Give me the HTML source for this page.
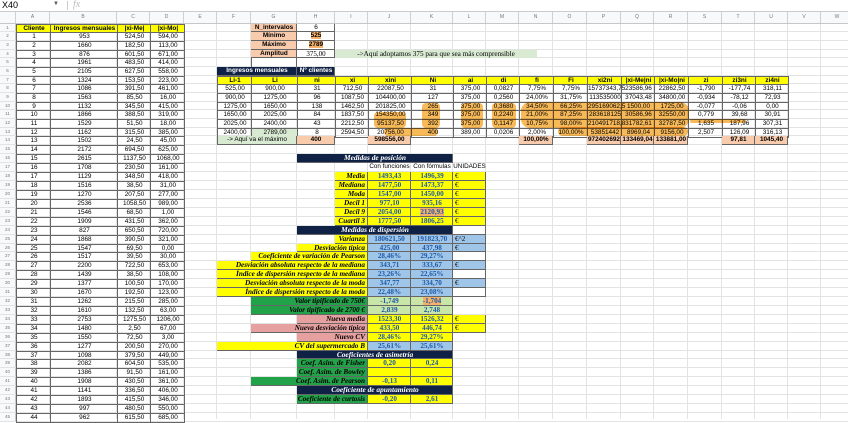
<!DOCTYPE html>
<html><head><meta charset="utf-8"><style>
*{box-sizing:border-box}
body{margin:0;width:848px;height:418px;overflow:hidden;background:#fff;font-family:"Liberation Sans",sans-serif;position:relative;color:#000}
.top{position:absolute;left:0;top:0;width:848px;height:12px;background:#fff;border-bottom:1px solid #ccc}
.top .nb{position:absolute;left:2px;top:0;font-size:9px;line-height:11px}
.top .dd{position:absolute;left:53px;top:1px;font-size:6px;color:#555}
.top .sep{position:absolute;left:67px;top:1px;width:1px;height:9px;background:#ccc}
.top .fx{position:absolute;left:73px;top:-1px;font-family:"Liberation Serif",serif;font-style:italic;font-size:10px;color:#bbb}
.ch{position:absolute;top:12px;left:0;height:11.5px;display:flex;background:#f8f9fa;border-bottom:1px solid #c7c7c7}
.ch div{height:100%;border-right:1px solid #d0d0d0;font-size:5px;color:#777;text-align:center;line-height:11px}
.vl{position:absolute;top:23.5px;left:0;height:395px;display:flex}
.vl div{height:100%;border-right:1px solid #e2e3e3}
.rows{position:absolute;top:23.5px;left:0;width:848px}
.rows div{width:848px;border-bottom:1px solid #e2e3e3;height:8.93px;font-size:4.5px;color:#777;position:relative}
.rows div.a{height:8.7px}
.rows span{position:absolute;left:0;top:0;width:16px;height:100%;background:#f8f9fa;border-right:1px solid #c7c7c7;text-align:center;line-height:8.7px}
.grid{position:absolute;display:grid;font-size:6.4px}
.grid>div{box-shadow:inset -1px -1px 0 #666;text-align:center;white-space:nowrap;line-height:8.7px;overflow:visible}
.lt{left:16px;top:23.5px;grid-template-columns:34px 67px 33px 34px;grid-template-rows:repeat(13,8.7px) repeat(31,8.93px);border-left:1px solid #666;border-top:1px solid #666}
.y{background:#ffff00}
.b{font-weight:bold}
.s{background:#f8cbad}
.n{background:#0f2145;color:#fff;font-weight:bold}
.lg{background:#d9ead3}
.mg{left:217px;top:23.5px;grid-template-columns:34px 46px 38px 33px 43px 42px 33px 33px 34px 34px 34px 33px 34px 34px 33px 33px;grid-template-rows:repeat(13,8.7px) repeat(32,8.93px)}
.rt{left:217px;top:75.7px;grid-template-columns:34px 46px 38px 33px 43px 42px 33px 33px 34px 34px 34px 33px 34px 34px 33px 33px;grid-template-rows:repeat(7,8.7px);border-left:1px solid #666;border-top:1px solid #666}
.mg>div.L{font-family:"Liberation Serif",serif;font-weight:bold;font-style:italic;font-size:7.2px;text-align:right;padding-right:3px}
.mg>div.H{font-family:"Liberation Serif",serif;font-weight:bold;font-style:italic;font-size:7.4px}
.mg>div.V{font-family:"Liberation Serif",serif;font-weight:bold;font-size:7.2px;color:#1d5aa8}
.mg>div.U{text-align:left;padding-left:2px;font-family:"Liberation Serif",serif;font-size:7px}
.mg>div.nb{box-shadow:none}
.bl{background:#9fc5e8}
.gr{background:#22a34a}
.lgn{background:#c9e6a9}
.pk{background:#e6a0a0}
.hl{position:absolute;background:#f7ad3c;opacity:.85;mix-blend-mode:multiply;border-radius:4px;z-index:5}
</style></head><body>
<div class="top"><span class="nb">X40</span><span class="dd">▼</span><span class="sep"></span><span class="fx">fx</span></div>
<div class="ch"><div style="width:16px"></div><div style="width:34px">A</div><div style="width:67px">B</div><div style="width:33px">C</div><div style="width:34px">D</div><div style="width:33px">E</div><div style="width:34px">F</div><div style="width:46px">G</div><div style="width:38px">H</div><div style="width:33px">I</div><div style="width:43px">J</div><div style="width:42px">K</div><div style="width:33px">L</div><div style="width:33px">M</div><div style="width:34px">N</div><div style="width:34px">O</div><div style="width:34px">P</div><div style="width:33px">Q</div><div style="width:34px">R</div><div style="width:34px">S</div><div style="width:33px">T</div><div style="width:33px">U</div><div style="width:33px">V</div><div style="width:33px">W</div></div>
<div class="vl"><div style="width:16px"></div><div style="width:34px"></div><div style="width:67px"></div><div style="width:33px"></div><div style="width:34px"></div><div style="width:33px"></div><div style="width:34px"></div><div style="width:46px"></div><div style="width:38px"></div><div style="width:33px"></div><div style="width:43px"></div><div style="width:42px"></div><div style="width:33px"></div><div style="width:33px"></div><div style="width:34px"></div><div style="width:34px"></div><div style="width:34px"></div><div style="width:33px"></div><div style="width:34px"></div><div style="width:34px"></div><div style="width:33px"></div><div style="width:33px"></div><div style="width:33px"></div><div style="width:33px"></div></div>
<div class="rows">
<div class="a"><span>1</span></div><div class="a"><span>2</span></div><div class="a"><span>3</span></div><div class="a"><span>4</span></div><div class="a"><span>5</span></div><div class="a"><span>6</span></div><div class="a"><span>7</span></div><div class="a"><span>8</span></div><div class="a"><span>9</span></div><div class="a"><span>10</span></div><div class="a"><span>11</span></div><div class="a"><span>12</span></div><div class="a"><span>13</span></div>
<div><span>14</span></div><div><span>15</span></div><div><span>16</span></div><div><span>17</span></div><div><span>18</span></div><div><span>19</span></div><div><span>20</span></div><div><span>21</span></div><div><span>22</span></div><div><span>23</span></div><div><span>24</span></div><div><span>25</span></div><div><span>26</span></div><div><span>27</span></div><div><span>28</span></div><div><span>29</span></div><div><span>30</span></div><div><span>31</span></div><div><span>32</span></div><div><span>33</span></div><div><span>34</span></div><div><span>35</span></div><div><span>36</span></div><div><span>37</span></div><div><span>38</span></div><div><span>39</span></div><div><span>40</span></div><div><span>41</span></div><div><span>42</span></div><div><span>43</span></div><div><span>44</span></div><div><span>45</span></div>
</div>

<div class="grid lt">
<div class="y b">Cliente</div><div class="y b">Ingresos mensuales</div><div class="y b">|xi-Me|</div><div class="y b">|xi-Mo|</div>
<div>1</div><div>953</div><div>524,50</div><div>594,00</div>
<div>2</div><div>1660</div><div>182,50</div><div>113,00</div>
<div>3</div><div>876</div><div>601,50</div><div>671,00</div>
<div>4</div><div>1961</div><div>483,50</div><div>414,00</div>
<div>5</div><div>2105</div><div>627,50</div><div>558,00</div>
<div>6</div><div>1324</div><div>153,50</div><div>223,00</div>
<div>7</div><div>1086</div><div>391,50</div><div>461,00</div>
<div>8</div><div>1563</div><div>85,50</div><div>16,00</div>
<div>9</div><div>1132</div><div>345,50</div><div>415,00</div>
<div>10</div><div>1866</div><div>388,50</div><div>319,00</div>
<div>11</div><div>1529</div><div>51,50</div><div>18,00</div>
<div>12</div><div>1162</div><div>315,50</div><div>385,00</div>
<div>13</div><div>1502</div><div>24,50</div><div>45,00</div>
<div>14</div><div>2172</div><div>694,50</div><div>625,00</div>
<div>15</div><div>2615</div><div>1137,50</div><div>1068,00</div>
<div>16</div><div>1708</div><div>230,50</div><div>161,00</div>
<div>17</div><div>1129</div><div>348,50</div><div>418,00</div>
<div>18</div><div>1516</div><div>38,50</div><div>31,00</div>
<div>19</div><div>1270</div><div>207,50</div><div>277,00</div>
<div>20</div><div>2536</div><div>1058,50</div><div>989,00</div>
<div>21</div><div>1546</div><div>68,50</div><div>1,00</div>
<div>22</div><div>1909</div><div>431,50</div><div>362,00</div>
<div>23</div><div>827</div><div>650,50</div><div>720,00</div>
<div>24</div><div>1868</div><div>390,50</div><div>321,00</div>
<div>25</div><div>1547</div><div>69,50</div><div>0,00</div>
<div>26</div><div>1517</div><div>39,50</div><div>30,00</div>
<div>27</div><div>2200</div><div>722,50</div><div>653,00</div>
<div>28</div><div>1439</div><div>38,50</div><div>108,00</div>
<div>29</div><div>1377</div><div>100,50</div><div>170,00</div>
<div>30</div><div>1670</div><div>192,50</div><div>123,00</div>
<div>31</div><div>1262</div><div>215,50</div><div>285,00</div>
<div>32</div><div>1610</div><div>132,50</div><div>63,00</div>
<div>33</div><div>2753</div><div>1275,50</div><div>1206,00</div>
<div>34</div><div>1480</div><div>2,50</div><div>67,00</div>
<div>35</div><div>1550</div><div>72,50</div><div>3,00</div>
<div>36</div><div>1277</div><div>200,50</div><div>270,00</div>
<div>37</div><div>1098</div><div>379,50</div><div>449,00</div>
<div>38</div><div>2082</div><div>604,50</div><div>535,00</div>
<div>39</div><div>1386</div><div>91,50</div><div>161,00</div>
<div>40</div><div>1908</div><div>430,50</div><div>361,00</div>
<div>41</div><div>1141</div><div>336,50</div><div>406,00</div>
<div>42</div><div>1893</div><div>415,50</div><div>346,00</div>
<div>43</div><div>997</div><div>480,50</div><div>550,00</div>
<div>44</div><div>962</div><div>615,50</div><div>685,00</div>
</div>

<div class="grid rt">
<div class="y b">Li-1</div><div class="y b">Li</div><div class="y b">ni</div><div class="y b">xi</div><div class="y b">xini</div><div class="y b">Ni</div><div class="y b">ai</div><div class="y b">di</div><div class="y b">fi</div><div class="y b">Fi</div><div class="y b">xi2ni</div><div class="y b">|xi-Me|ni</div><div class="y b">|xi-Mo|ni</div><div class="y b">zi</div><div class="y b">zi3ni</div><div class="y b">zi4ni</div>
<div>525,00</div><div>900,00</div><div>31</div><div>712,50</div><div>22087,50</div><div>31</div><div>375,00</div><div>0,0827</div><div>7,75%</div><div>7,75%</div><div>15737343,75</div><div>23586,96</div><div>22862,50</div><div>-1,790</div><div>-177,74</div><div>318,11</div>
<div>900,00</div><div>1275,00</div><div>96</div><div>1087,50</div><div>104400,00</div><div>127</div><div>375,00</div><div>0,2560</div><div>24,00%</div><div>31,75%</div><div>113535000</div><div>37043,48</div><div>34800,00</div><div>-0,934</div><div>-78,12</div><div>72,93</div>
<div>1275,00</div><div>1650,00</div><div>138</div><div>1462,50</div><div>201825,00</div><div>265</div><div>375,00</div><div>0,3680</div><div>34,50%</div><div>66,25%</div><div>295169062,5</div><div>1500,00</div><div>1725,00</div><div>-0,077</div><div>-0,06</div><div>0,00</div>
<div>1650,00</div><div>2025,00</div><div>84</div><div>1837,50</div><div>154350,00</div><div>349</div><div>375,00</div><div>0,2240</div><div>21,00%</div><div>87,25%</div><div>283618125</div><div>30586,96</div><div>32550,00</div><div>0,779</div><div>39,68</div><div>30,91</div>
<div>2025,00</div><div>2400,00</div><div>43</div><div>2212,50</div><div>95137,50</div><div>392</div><div>375,00</div><div>0,1147</div><div>10,75%</div><div>98,00%</div><div>210491718,8</div><div>31782,61</div><div>32787,50</div><div>1,635</div><div>187,96</div><div>307,31</div>
<div>2400,00</div><div class="lg">2789,00</div><div>8</div><div>2594,50</div><div>20756,00</div><div>400</div><div>389,00</div><div>0,0206</div><div>2,00%</div><div>100,00%</div><div>53851442</div><div>8969,04</div><div>9156,00</div><div>2,507</div><div>126,09</div><div>316,13</div>
</div>

<div class="grid mg">
<div class="s b" style="grid-area:1/2">N_intervalos</div><div style="grid-area:1/3">6</div>
<div class="s b" style="grid-area:2/2">Mínimo</div><div class="b" style="grid-area:2/3"><span style="background:#f6b26b">525</span></div>
<div class="s b" style="grid-area:3/2">Máximo</div><div class="b" style="grid-area:3/3"><span style="background:#f6b26b">2789</span></div>
<div class="s b" style="grid-area:4/2">Amplitud</div><div style="grid-area:4/3;font-family:'Liberation Serif',serif;font-size:7px">375,00</div>
<div style="grid-area:5/2;box-shadow:inset -1px 0 0 #666,inset 1px 0 0 #666"></div>
<div class="lg nb" style="grid-area:4/4/5/10;width:202px;font-family:'Liberation Serif',serif;font-size:7.2px;box-shadow:none">-&gt;Aquí adoptamos 375 para que sea más comprensible</div>
<div class="n" style="grid-area:6/1/7/3">Ingresos mensuales</div><div class="n" style="grid-area:6/3">Nº clientes</div>
<div class="lg" style="grid-area:14/1/15/3;box-shadow:inset -1px -1px 0 #666,inset 1px 0 0 #666">-&gt; Aquí va el máximo</div>
<div class="s b" style="grid-area:14/3">400</div>
<div class="s b" style="grid-area:14/5">598556,00</div>
<div class="s b" style="grid-area:14/9">100,00%</div>
<div class="s b" style="grid-area:14/11">972402692</div><div class="s b" style="grid-area:14/12">133469,04</div><div class="s b" style="grid-area:14/13">133881,00</div>
<div class="s b" style="grid-area:14/15">97,81</div><div class="s b" style="grid-area:14/16">1045,40</div>

<div class="n H" style="grid-area:16/3/17/7">Medidas de posición</div>
<div class="nb" style="grid-area:17/5;font-size:6.3px">Con funciones</div><div class="nb" style="grid-area:17/6;font-size:6.3px">Con fórmulas</div><div class="nb" style="grid-area:17/7;font-size:6.3px">UNIDADES</div>
<div class="y L" style="grid-area:18/4">Media</div><div class="y V" style="grid-area:18/5">1493,43</div><div class="y V" style="grid-area:18/6">1496,39</div><div class="y U" style="grid-area:18/7">€</div>
<div class="y L" style="grid-area:19/4">Mediana</div><div class="y V" style="grid-area:19/5">1477,50</div><div class="y V" style="grid-area:19/6">1473,37</div><div class="y U" style="grid-area:19/7">€</div>
<div class="y L" style="grid-area:20/4">Moda</div><div class="y V" style="grid-area:20/5">1547,00</div><div class="y V" style="grid-area:20/6">1450,00</div><div class="y U" style="grid-area:20/7">€</div>
<div class="y L" style="grid-area:21/4">Decil 1</div><div class="y V" style="grid-area:21/5">977,10</div><div class="y V" style="grid-area:21/6">935,16</div><div class="y U" style="grid-area:21/7">€</div>
<div class="y L" style="grid-area:22/4">Decil 9</div><div class="y V" style="grid-area:22/5">2054,00</div><div class="y V" style="grid-area:22/6"><span style="background:#f6b26b">2120,93</span></div><div class="y U" style="grid-area:22/7">€</div>
<div class="y L" style="grid-area:23/4">Cuartil 3</div><div class="y V" style="grid-area:23/5">1777,50</div><div class="y V" style="grid-area:23/6">1806,25</div><div class="y U" style="grid-area:23/7">€</div>
<div class="n H" style="grid-area:24/3/25/7">Medidas de dispersión</div><div style="grid-area:24/7"></div>
<div class="y L" style="grid-area:25/4">Varianza</div><div class="bl V" style="grid-area:25/5">180621,50</div><div class="bl V" style="grid-area:25/6">191823,70</div><div class="bl U" style="grid-area:25/7">€^2</div>
<div class="y L" style="grid-area:26/3/27/5">Desviación típica</div><div class="bl V" style="grid-area:26/5">425,00</div><div class="bl V" style="grid-area:26/6">437,98</div><div class="bl U" style="grid-area:26/7">€</div>
<div class="y L" style="grid-area:27/2/28/5">Coeficiente de variación de Pearson</div><div class="bl V" style="grid-area:27/5">28,46%</div><div class="bl V" style="grid-area:27/6">29,27%</div><div style="grid-area:27/7"></div>
<div class="y L" style="grid-area:28/1/29/5">Desviación absoluta respecto de la mediana</div><div class="bl V" style="grid-area:28/5">343,71</div><div class="bl V" style="grid-area:28/6">333,67</div><div class="bl U" style="grid-area:28/7">€</div>
<div class="y L" style="grid-area:29/1/30/5">Índice de dispersión respecto de la mediana</div><div class="bl V" style="grid-area:29/5">23,26%</div><div class="bl V" style="grid-area:29/6">22,65%</div><div style="grid-area:29/7"></div>
<div class="y L" style="grid-area:30/1/31/5">Desviación absoluta respecto de la moda</div><div class="bl V" style="grid-area:30/5">347,77</div><div class="bl V" style="grid-area:30/6">334,70</div><div class="bl U" style="grid-area:30/7">€</div>
<div class="y L" style="grid-area:31/1/32/5">Índice de dispersión respecto de la moda</div><div class="bl V" style="grid-area:31/5">22,48%</div><div class="bl V" style="grid-area:31/6">23,08%</div><div style="grid-area:31/7"></div>
<div class="gr L" style="grid-area:32/2/33/5">Valor tipificado de 750€</div><div class="lgn V" style="grid-area:32/5">-1,749</div><div class="lgn V" style="grid-area:32/6"><span style="background:#f6b26b">-1,704</span></div>
<div class="gr L" style="grid-area:33/2/34/5">Valor tipificado de 2700 €</div><div class="lgn V" style="grid-area:33/5">2,839</div><div class="lgn V" style="grid-area:33/6">2,748</div>
<div class="pk L" style="grid-area:34/3/35/5">Nueva media</div><div class="y V" style="grid-area:34/5">1523,30</div><div class="y V" style="grid-area:34/6">1526,32</div><div class="y U" style="grid-area:34/7">€</div>
<div class="pk L" style="grid-area:35/2/36/5">Nueva desviación típica</div><div class="y V" style="grid-area:35/5">433,50</div><div class="y V" style="grid-area:35/6">446,74</div><div class="y U" style="grid-area:35/7">€</div>
<div class="pk L" style="grid-area:36/3/37/5">Nuevo CV</div><div class="y V" style="grid-area:36/5">28,46%</div><div class="y V" style="grid-area:36/6">29,27%</div>
<div class="y L" style="grid-area:37/1/38/5">CV del supermercado B</div><div class="bl V" style="grid-area:37/5">25,61%</div><div class="bl V" style="grid-area:37/6">25,61%</div>
<div class="n H" style="grid-area:38/3/39/7">Coeficientes de asimetría</div>
<div class="gr L" style="grid-area:39/3/40/5">Coef. Asim. de Fisher</div><div class="y V" style="grid-area:39/5">0,20</div><div class="y V" style="grid-area:39/6">0,24</div>
<div class="gr L" style="grid-area:40/3/41/5">Coef. Asim. de Bowley</div><div class="y V" style="grid-area:40/5"></div><div class="y V" style="grid-area:40/6"></div>
<div class="gr L" style="grid-area:41/2/42/5">Coef. Asim. de Pearson</div><div class="y V" style="grid-area:41/5">-0,13</div><div class="y V" style="grid-area:41/6">0,11</div>
<div class="n H" style="grid-area:42/3/43/7">Coeficiente de apuntamiento</div>
<div class="gr L" style="grid-area:43/3/44/5">Coeficiente de curtosis</div><div class="y V" style="grid-area:43/5">-0,20</div><div class="y V" style="grid-area:43/6">2,61</div>
</div>

<div class="hl" style="left:422px;top:103px;width:18px;height:25px"></div>
<div class="hl" style="left:461px;top:103px;width:22px;height:25px"></div>
<div class="hl" style="left:492px;top:103px;width:24px;height:25px"></div>
<div class="hl" style="left:374px;top:112px;width:32px;height:16px"></div>
<div class="hl" style="left:384px;top:128px;width:54px;height:8px"></div>
<div class="hl" style="left:521px;top:102px;width:168px;height:26px;border-radius:9px"></div>
<div class="hl" style="left:558px;top:127px;width:130px;height:9px;border-radius:6px"></div>
<div class="hl" style="left:690px;top:119px;width:56px;height:4px"></div>
</body></html>
